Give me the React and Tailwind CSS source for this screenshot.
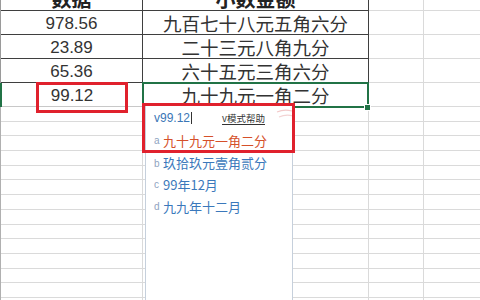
import React from "react";

const dataRows = [
  ["978.56", "九百七十八元五角六分"],
  ["23.89", "二十三元八角九分"],
  ["65.36", "六十五元三角六分"],
  ["99.12", "九十九元一角二分"],
];

const cjk = { fontFamily: '"Noto Sans CJK SC", "Liberation Sans", sans-serif' };
const num = { fontFamily: '"Liberation Sans", Arial, sans-serif' };

function HeaderRow() {
  return (
    <div className="flex h-[24px]">
      <div className="w-[1px] bg-[#9a9a9a]" />
      <div className="w-[142px] border-r border-b border-[#3f3f3f] flex items-center justify-center text-[20px] font-bold text-[#222]" style={cjk}>
        数据
      </div>
      <div className="w-[226px] border-r border-b border-[#3f3f3f] flex items-center justify-center text-[20px] font-bold text-[#222]" style={cjk}>
        小数金额
      </div>
      <div className="w-[55px] border-r border-b border-[#dadada]" />
      <div className="flex-1 border-b border-[#dadada]" />
    </div>
  );
}

function DataRow({ a, b, last }) {
  return (
    <div className="flex h-[24px]">
      <div className={last ? "w-[2px] bg-[#217346]" : "w-[1px] bg-[#9a9a9a]"} />
      <div
        className={
          (last ? "w-[141px] border-b-[#c8c8c8] " : "w-[142px] border-b-[#3f3f3f] ") +
          "border-r border-b border-r-[#3f3f3f] flex items-center justify-center pt-[3px] text-[17px] text-[#333]"
        }
        style={num}
      >
        {a}
      </div>
      <div
        className="w-[226px] border-r border-b border-[#3f3f3f] flex items-center justify-center pt-[3px] text-[18.5px] text-[#333]"
        style={cjk}
      >
        {b}
      </div>
      <div className="w-[55px] border-r border-b border-[#dadada]" />
      <div className="flex-1 border-b border-[#dadada]" />
    </div>
  );
}

function EmptyRow() {
  return (
    <div className="flex h-[14.7px]">
      <div className="w-[1px] bg-[#b0b0b0]" />
      <div className="w-[142px] border-r border-b border-[#dadada]" />
      <div className="w-[226px] border-r border-b border-[#dadada]" />
      <div className="w-[55px] border-r border-b border-[#dadada]" />
      <div className="flex-1 border-b border-[#dadada]" />
    </div>
  );
}

export default function App() {
  return (
    <div className="relative w-[480px] h-[300px] overflow-hidden bg-white">
      <div className="flex flex-col -mt-[13px]">
        <HeaderRow />
        {dataRows.map((r, i) => (
          <DataRow key={i} a={r[0]} b={r[1]} last={i === 3} />
        ))}
        {Array.from({ length: 14 }).map((_, i) => (
          <EmptyRow key={i} />
        ))}
      </div>

      {/* selected cell B4 */}
      <div className="absolute left-[142px] top-[82px] w-[227px] h-[26px] border-2 border-[#217346]" />
      <div className="absolute left-[364px] top-[104px] w-[5px] h-[5px] bg-[#217346] border border-white box-content" />

      {/* red box around 99.12 */}
      <div className="absolute left-[36px] top-[82px] w-[92px] h-[31px] border-[3px] border-[#e0212d]" />

      {/* input popup */}
      <div className="absolute left-[145px] top-[105px] w-[148px] h-[200px] bg-white border border-[#c6d0dc]">
        <div className="flex items-center h-[23px] pl-[8px] pt-[1px]">
          <span className="text-[12px] text-[#3a76b6]" style={num}>v99.12</span>
          <span className="w-[1px] h-[12px] bg-[#333] ml-[1px]" />
          <span
            className="ml-[30px] text-[9.5px] text-[#333] underline underline-offset-2"
            style={cjk}
          >
            v模式帮助
          </span>
        </div>
        <div className="flex items-center h-[23px] pl-[8px]">
          <span className="text-[10px] text-[#8fa3bf] w-[9px]" style={num}>a</span>
          <span className="text-[13px] text-[#d5502a]" style={cjk}>九十九元一角二分</span>
        </div>
        <div className="flex items-center h-[22px] pl-[8px]">
          <span className="text-[10px] text-[#8fa3bf] w-[9px]" style={num}>b</span>
          <span className="text-[13px] text-[#3b78bb]" style={cjk}>玖拾玖元壹角贰分</span>
        </div>
        <div className="flex items-center h-[21.5px] pl-[8px]">
          <span className="text-[10px] text-[#8fa3bf] w-[9px]" style={num}>c</span>
          <span className="text-[13px] text-[#3b78bb]" style={cjk}>99年12月</span>
        </div>
        <div className="flex items-center h-[21.5px] pl-[8px]">
          <span className="text-[10px] text-[#8fa3bf] w-[9px]" style={num}>d</span>
          <span className="text-[13px] text-[#3b78bb]" style={cjk}>九九年十二月</span>
        </div>
      </div>

      {/* faint mark */}
      <svg className="absolute left-[276px] top-[108px]" width="18" height="12" viewBox="0 0 18 12">
        <path d="M1 4 Q8 1 16 3" stroke="#f3c9c9" strokeWidth="1.2" fill="none" />
        <path d="M3 9 Q10 6 17 8" stroke="#f3d3d3" strokeWidth="1.2" fill="none" />
      </svg>

      {/* red box around popup top */}
      <div className="absolute left-[142px] top-[103px] w-[153px] h-[50px] border-[3px] border-[#e0212d]" />
    </div>
  );
}
